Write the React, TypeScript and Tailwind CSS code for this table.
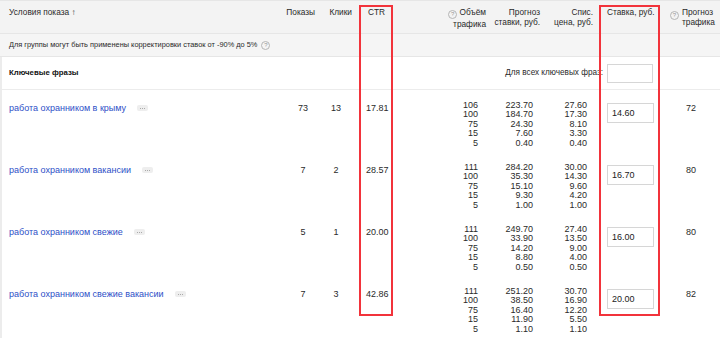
import React from "react";

type Row = {
  phrase: string;
  shows: number;
  clicks: number;
  ctr: string;
  volume: number[];
  forecast: string[];
  price: string[];
  bid: string;
  traffic: number;
};

const ROWS: Row[] = [
  {
    phrase: "работа охранником в крыму",
    shows: 73,
    clicks: 13,
    ctr: "17.81",
    volume: [106, 100, 75, 15, 5],
    forecast: ["223.70", "184.70", "24.30", "7.60", "0.40"],
    price: ["27.60", "17.30", "8.10", "3.30", "0.40"],
    bid: "14.60",
    traffic: 72,
  },
  {
    phrase: "работа охранником вакансии",
    shows: 7,
    clicks: 2,
    ctr: "28.57",
    volume: [111, 100, 75, 15, 5],
    forecast: ["284.20", "35.30", "15.10", "9.30", "1.00"],
    price: ["30.00", "14.30", "9.60", "4.20", "1.00"],
    bid: "16.70",
    traffic: 80,
  },
  {
    phrase: "работа охранником свежие",
    shows: 5,
    clicks: 1,
    ctr: "20.00",
    volume: [111, 100, 75, 15, 5],
    forecast: ["249.70", "33.90", "14.20", "8.80", "0.50"],
    price: ["27.40", "13.50", "9.00", "4.00", "0.50"],
    bid: "16.00",
    traffic: 80,
  },
  {
    phrase: "работа охранником свежие вакансии",
    shows: 7,
    clicks: 3,
    ctr: "42.86",
    volume: [111, 100, 75, 15, 5],
    forecast: ["251.20", "38.50", "16.40", "11.90", "1.10"],
    price: ["30.70", "16.90", "12.20", "5.50", "1.10"],
    bid: "20.00",
    traffic: 82,
  },
];

// shared column template — widths read off the screenshot
const COLS = "grid grid-cols-[284px_34px_38px_42px_92px_54px_53px_65px_58px]";

function Help() {
  return (
    <span className="inline-flex h-[9px] w-[9px] shrink-0 items-center justify-center rounded-full border border-[#b5b5b5] align-[-1px] text-[6px] leading-none text-[#999]">
      ?
    </span>
  );
}

function Stack({ items }: { items: (string | number)[] }) {
  return (
    <div className="flex flex-col leading-[9.4px]">
      {items.map((v, i) => (
        <span key={i}>{v}</span>
      ))}
    </div>
  );
}

export default function App() {
  return (
    <div className="relative h-[341px] w-[720px] overflow-hidden bg-white font-['Liberation_Sans',Arial,sans-serif] text-[9px] text-[#2a2a2a]">
      {/* header */}
      <div className={`${COLS} h-[34px] border-y border-[#e6e6e6] bg-[#f3f3f3] pt-[6px] text-[8.3px] leading-[10px]`}>
        <div className="pl-[9px]">Условия показа ↑</div>
        <div className="text-right pr-[3px]">Показы</div>
        <div className="text-right pr-[4px]">Клики</div>
        <div className="pl-[12px]">CTR</div>
        <div className="text-right pr-[4px]">
          <Help /> Объём<br />трафика
        </div>
        <div className="text-right pr-[4px]">Прогноз<br />ставки, руб.</div>
        <div className="text-right pr-[4px]">Спис.<br />цена, руб.</div>
        <div className="pl-[10px]">Ставка, руб.</div>
        <div className="flex gap-[3px] pl-[8px]">
          <span className="mt-[1px]"><Help /></span>
          <span>Прогноз<br />трафика</span>
        </div>
      </div>

      {/* info */}
      <div className="flex h-[23px] items-center gap-[4px] border-b border-[#e6e6e6] bg-[#f5f5f5] pl-[9px] text-[7.4px]">
        <span>Для группы могут быть применены корректировки ставок от -90% до 5%</span>
        <Help />
      </div>

      <div className="border-l-2 border-[#ececec]">
        {/* keyword phrases */}
        <div className="flex h-[33px] items-center justify-between border-b border-[#ececec] pl-[7px] pr-[67px]">
          <span className="text-[7.8px] font-bold text-[#111]">Ключевые фразы</span>
          <div className="flex items-center gap-[4px] text-[8.2px]">
            <span>Для всех ключевых фраз:</span>
            <div className="h-[19px] w-[46px] border border-[#d6d6d6] bg-white" />
          </div>
        </div>

        {ROWS.map((r) => (
          <div key={r.phrase} className={`${COLS} h-[62px] -ml-[2px] pt-[11px] leading-[10px]`}>
            <div className="flex items-start gap-[11px] pl-[9px] pt-[2px]">
              <span className="text-[#2e4fc7]">{r.phrase}</span>
              <span className="mt-[2px] flex h-[6px] w-[11px] items-center justify-center gap-[1px] rounded-[2px] bg-[#eeeeee]">
                <i className="h-[1px] w-[1px] bg-[#aaa]" />
                <i className="h-[1px] w-[1px] bg-[#aaa]" />
                <i className="h-[1px] w-[1px] bg-[#aaa]" />
              </span>
            </div>
            <div className="pt-[2px] text-center pl-[4px]">{r.shows}</div>
            <div className="pt-[2px] text-center pr-[2px]">{r.clicks}</div>
            <div className="pt-[2px] pl-[10px]">{r.ctr}</div>
            <div className="flex justify-end pr-[12px] text-right">
              <Stack items={r.volume} />
            </div>
            <div className="flex justify-end pr-[11px] text-right">
              <Stack items={r.forecast} />
            </div>
            <div className="flex justify-end pr-[10px] text-right">
              <Stack items={r.price} />
            </div>
            <div className="pl-[10px] pt-[2px]">
              <div className="flex h-[20px] w-[47px] items-center border border-[#d6d6d6] bg-white pl-[4px] text-[#222]">
                {r.bid}
              </div>
            </div>
            <div className="pt-[2px] text-center pl-[0px]">{r.traffic}</div>
          </div>
        ))}
      </div>

      {/* red annotation frames drawn over the table */}
      <div className="pointer-events-none absolute left-[359px] top-[5px] h-[311px] w-[34px] border-2 border-[#f2333b]" />
      <div className="pointer-events-none absolute left-[599px] top-[5px] h-[311px] w-[61px] border-2 border-[#f2333b]" />
    </div>
  );
}
